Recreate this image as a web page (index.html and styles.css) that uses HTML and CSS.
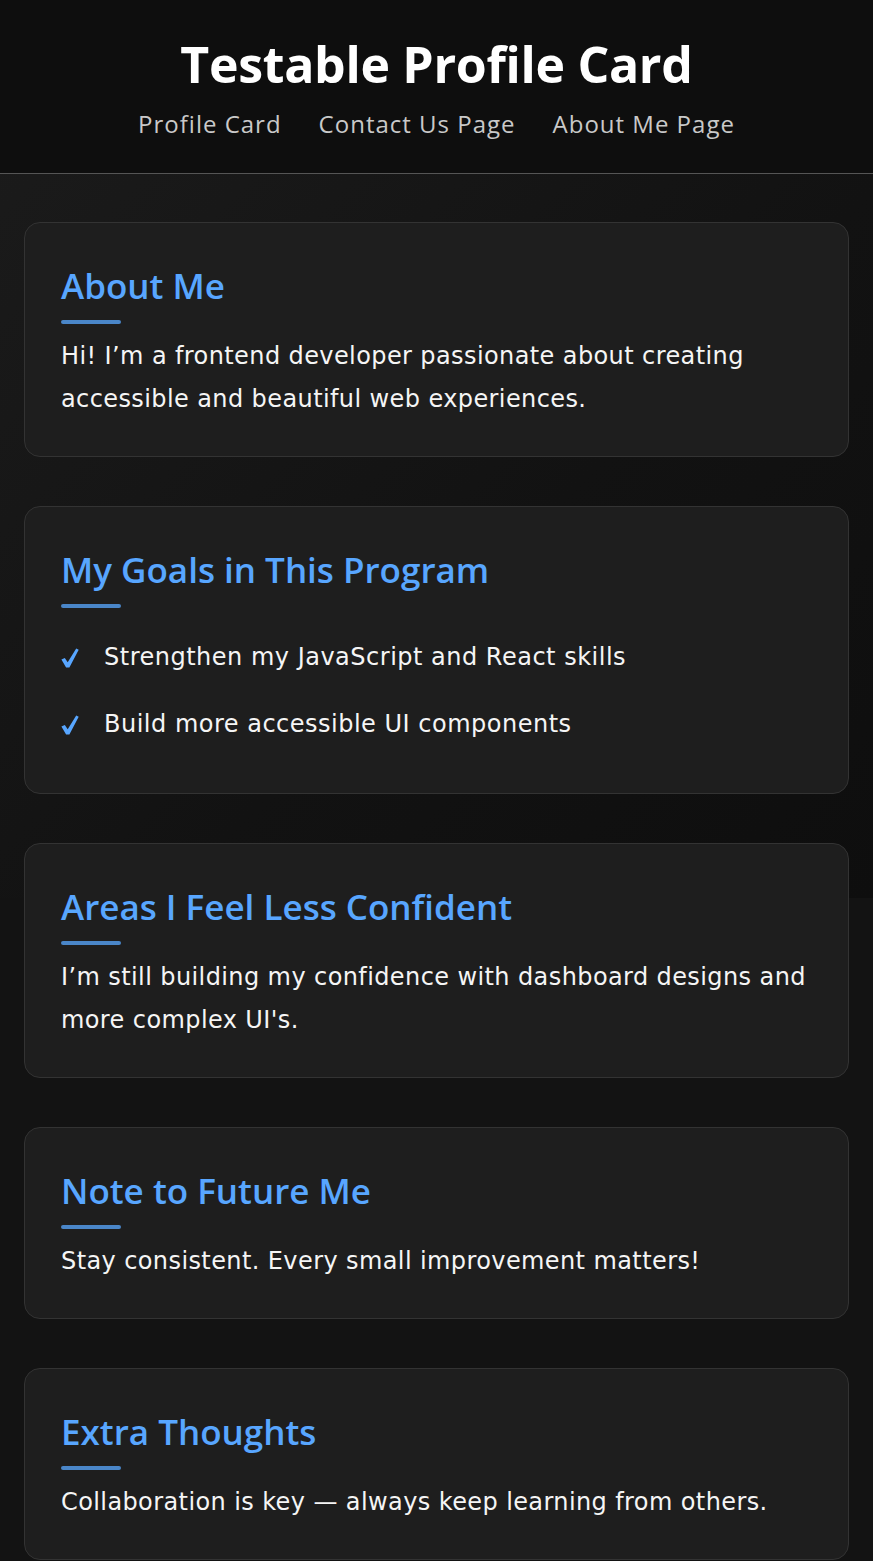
FILE: index.html
```html
<!DOCTYPE html>
<html lang="en">
<head>
<meta charset="utf-8">
<title>Testable Profile Card</title>
<link rel="stylesheet" href="styles.css">
</head>
<body>
<header class="site-header">
  <h1 class="site-title">Testable Profile Card</h1>
  <nav class="site-nav">
    <a href="#" class="nav-link">Profile Card</a>
    <a href="#" class="nav-link">Contact Us Page</a>
    <a href="#" class="nav-link">About Me Page</a>
  </nav>
</header>
<main class="content">
  <section class="card">
    <h2 class="card-title">About Me</h2>
    <div class="card-bar"></div>
    <p class="card-text">Hi! I’m a frontend developer passionate about creating accessible and beautiful web experiences.</p>
  </section>
  <section class="card">
    <h2 class="card-title">My Goals in This Program</h2>
    <div class="card-bar"></div>
    <ul class="goal-list">
      <li class="goal-item"><span class="goal-check"><svg class="check-icon" viewBox="0 0 18 20" width="18" height="20" aria-hidden="true"><path d="M0.4 11.6 L3.8 9.9 L6.7 14.3 L15.2 0.5 L17.7 1.7 L8.4 19.5 L5.1 19.5 Z"/></svg></span>Strengthen my JavaScript and React skills</li>
      <li class="goal-item"><span class="goal-check"><svg class="check-icon" viewBox="0 0 18 20" width="18" height="20" aria-hidden="true"><path d="M0.4 11.6 L3.8 9.9 L6.7 14.3 L15.2 0.5 L17.7 1.7 L8.4 19.5 L5.1 19.5 Z"/></svg></span>Build more accessible UI components</li>
    </ul>
  </section>
  <section class="card">
    <h2 class="card-title">Areas I Feel Less Confident</h2>
    <div class="card-bar"></div>
    <p class="card-text">I’m still building my confidence with dashboard designs and more complex UI's.</p>
  </section>
  <section class="card">
    <h2 class="card-title">Note to Future Me</h2>
    <div class="card-bar"></div>
    <p class="card-text">Stay consistent. Every small improvement matters!</p>
  </section>
  <section class="card">
    <h2 class="card-title">Extra Thoughts</h2>
    <div class="card-bar"></div>
    <p class="card-text">Collaboration is key — always keep learning from others.</p>
  </section>
</main>
</body>
</html>
```
FILE: styles.css
```css
* { box-sizing: border-box; }
html, body { margin: 0; padding: 0; }
body {
  font-family: "Open Sans", "Liberation Sans", sans-serif;
  color: #f5f5f5;
  background-color: #131313;
  background-image: linear-gradient(135deg, #1c1c1c 0%, #121212 60%, #0e0e0e 100%);
  background-size: 100% 898px;
  background-repeat: no-repeat;
}
.site-header {
  background: #0e0e0e;
  border-bottom: 1px solid #555;
  height: 174px;
  padding-top: 34px;
  text-align: center;
}
.site-title {
  margin: 0;
  font-size: 50px;
  line-height: 60px;
  font-weight: 700;
  letter-spacing: -0.3px;
  color: #ffffff;
}
.site-nav {
  display: flex;
  justify-content: center;
  gap: 37px;
  margin-top: 15px;
}
.nav-link {
  color: #c9c9c9;
  text-decoration: none;
  font-size: 24px;
  line-height: 30px;
  letter-spacing: 1px;
}
.content {
  display: flex;
  flex-direction: column;
  gap: 49px;
  padding: 48px 24px 48px 24px;
}
.card {
  background: #1e1e1e;
  border: 1px solid #333;
  border-radius: 16px;
  padding: 36px 36px 35px 36px;
}
.card-title {
  margin: 0 0 8px 0;
  font-size: 35px;
  line-height: 53px;
  font-weight: 600;
  color: #58a6ff;
}
.card-bar {
  width: 60px;
  height: 4px;
  border-radius: 2px;
  background: #4a86c8;
}
.card-text {
  margin: 11px 0 0 0;
  font-family: "DejaVu Sans", "Open Sans", sans-serif;
  font-size: 24px;
  line-height: 43px;
  letter-spacing: 0.4px;
}
.goal-list {
  list-style: none;
  margin: 16px 0 0 0;
  padding: 0;
}
.goal-item {
  padding: 12px 0;
  font-family: "DejaVu Sans", "Open Sans", sans-serif;
  font-size: 24px;
  line-height: 43px;
  letter-spacing: 0.5px;
  display: flex;
  align-items: center;
}
.goal-check {
  width: 43px;
  flex: none;
  display: flex;
  align-items: center;
}
.check-icon {
  fill: #58a6ff;
  display: block;
}
```
